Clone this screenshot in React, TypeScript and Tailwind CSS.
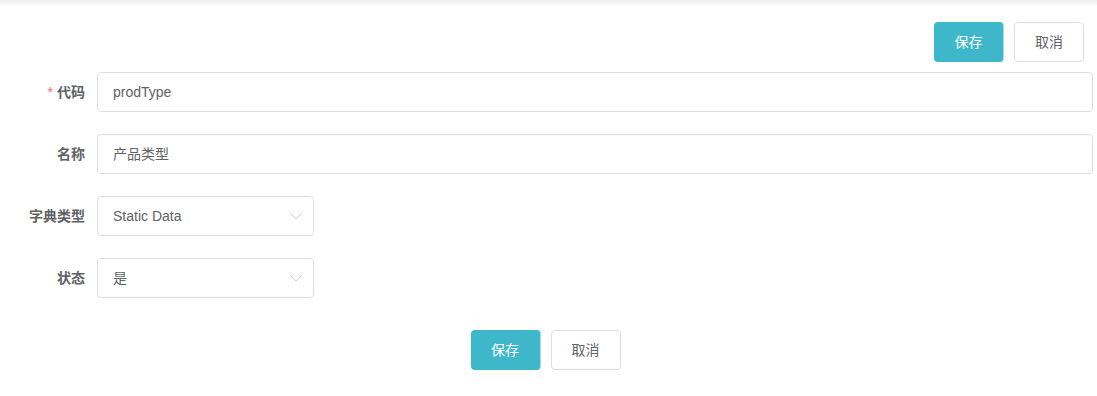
function Btn({ primary, children }: { primary?: boolean; children: string }) {
  if (primary) {
    return (
      <button className="h-10 w-[70px] rounded-[4px] bg-[#3fb7cb] border-r border-[#a6dde6] text-[14px] text-white">
        {children}
      </button>
    );
  }
  return (
    <button className="h-10 w-[70px] rounded-[4px] bg-white border border-[#dcdfe6] text-[14px] text-[#606266]">
      {children}
    </button>
  );
}

function Row({ label, required, children }: { label: string; required?: boolean; children: React.ReactNode }) {
  return (
    <div className="flex items-center mb-[22px]">
      <label className="w-[85px] shrink-0 text-right text-[14px] font-bold text-[#606266] mr-3">
        {required && <span className="text-[#f56c6c] font-normal mr-1">*</span>}
        {label}
      </label>
      {children}
    </div>
  );
}

function Select({ value }: { value: string }) {
  return (
    <div className="h-10 w-[217px] flex items-center justify-between rounded-[4px] border border-[#dcdfe6] pl-[15px] pr-[11px] text-[14px] text-[#606266]">
      <span>{value}</span>
      <svg width="12" height="7" viewBox="0 0 12 7" fill="none" stroke="#c9ccd3" strokeWidth="1">
        <path d="M0.5 0.5 L6 6 L11.5 0.5" />
      </svg>
    </div>
  );
}

export default function App() {
  return (
    <div className="w-[1097px] h-[396px] bg-white" style={{ fontFamily: '"Liberation Sans", "Noto Sans CJK SC", sans-serif' }}>
      <div className="h-[6px] bg-gradient-to-b from-[#eeeeee] to-white" />
      <div className="flex justify-end gap-[10px] pr-[13px] pt-4 mb-[10px]">
        <Btn primary>保存</Btn>
        <Btn>取消</Btn>
      </div>
      <div className="pr-1">
        <Row label="代码" required>
          <div className="h-10 flex-1 flex items-center rounded-[4px] border border-[#dcdfe6] px-[15px] text-[14px] text-[#606266]">
            prodType
          </div>
        </Row>
        <Row label="名称">
          <div className="h-10 flex-1 flex items-center rounded-[4px] border border-[#dcdfe6] px-[15px] text-[14px] text-[#606266]">
            产品类型
          </div>
        </Row>
        <Row label="字典类型">
          <Select value="Static Data" />
        </Row>
        <Row label="状态">
          <Select value="是" />
        </Row>
      </div>
      <div className="flex justify-center gap-[10px] pr-[6px] pt-[10px]">
        <Btn primary>保存</Btn>
        <Btn>取消</Btn>
      </div>
    </div>
  );
}
